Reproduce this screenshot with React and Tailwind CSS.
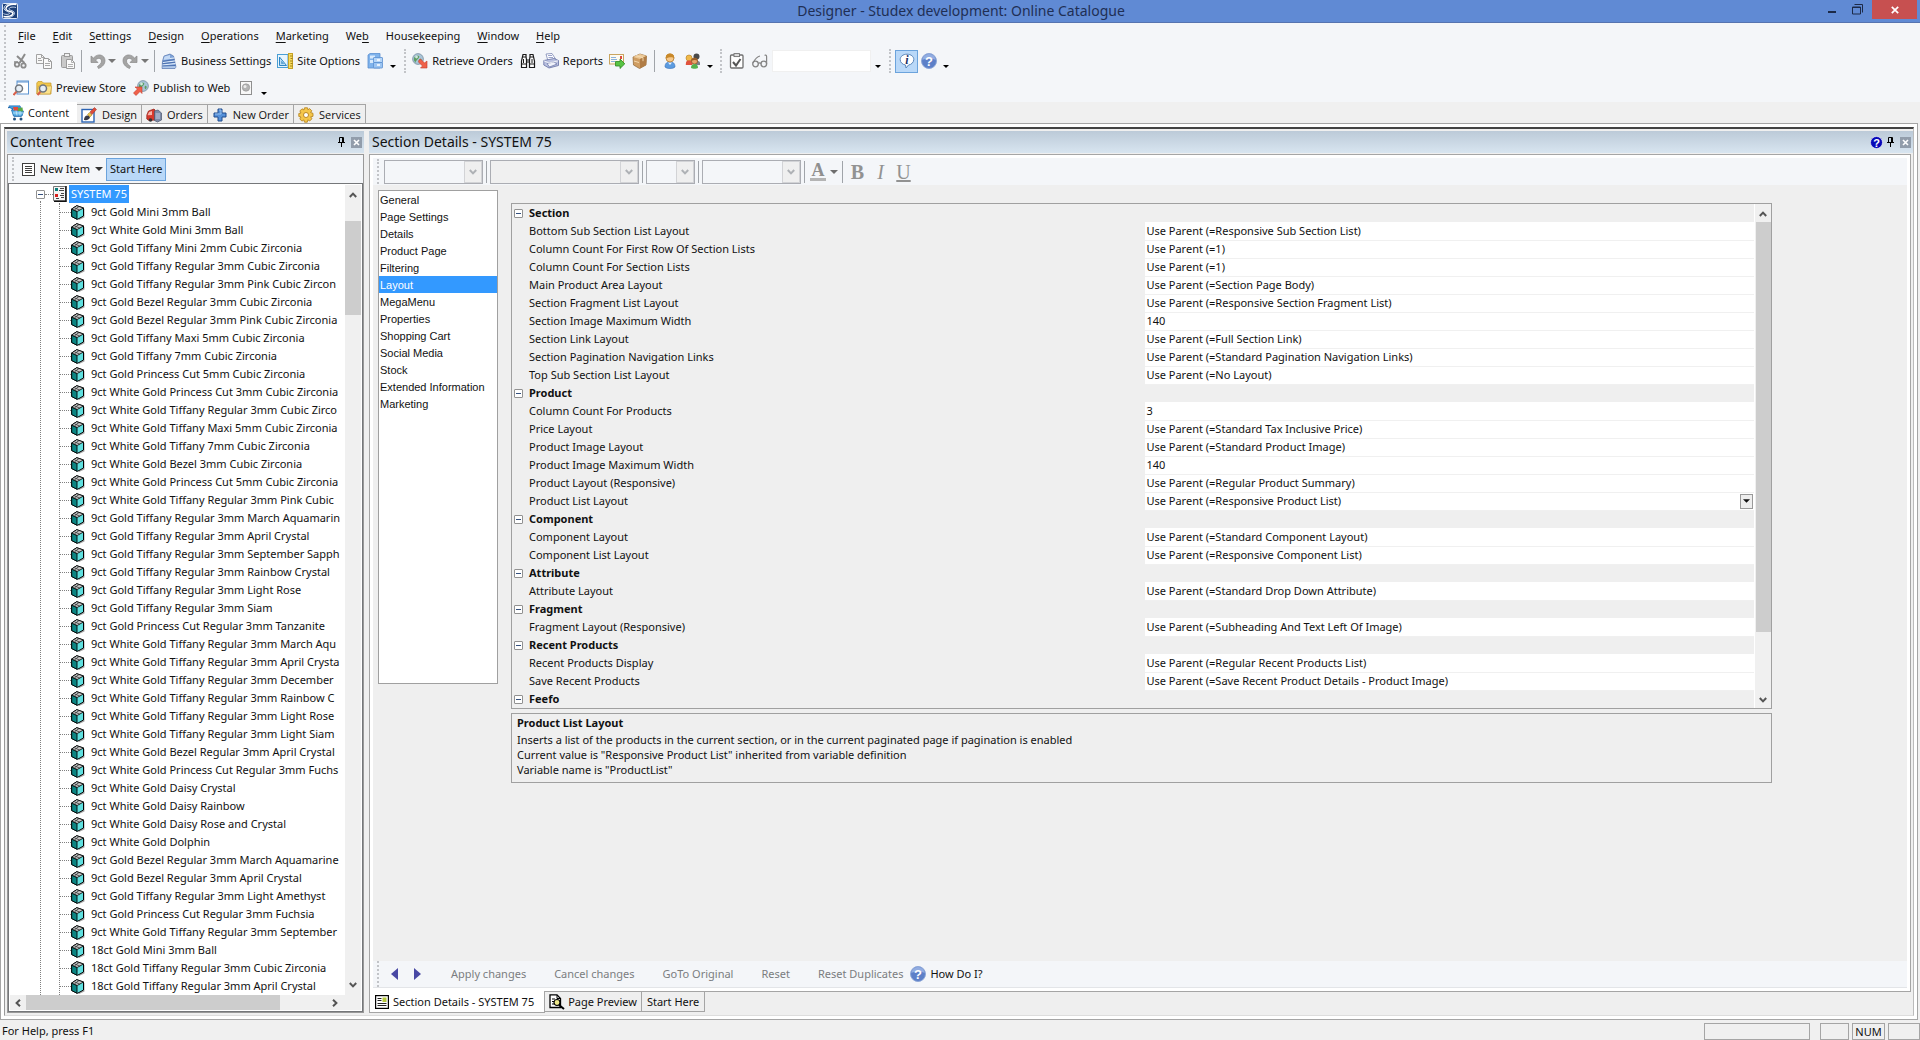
import { clsx } from 'clsx'

const menus = [
  ['', 'F', 'ile'],
  ['', 'E', 'dit'],
  ['', 'S', 'ettings'],
  ['', 'D', 'esign'],
  ['', 'O', 'perations'],
  ['', 'M', 'arketing'],
  ['We', 'b', ''],
  ['House', 'k', 'eeping'],
  ['', 'W', 'indow'],
  ['', 'H', 'elp'],
]

const treeItems = [
  '9ct Gold Mini 3mm Ball',
  '9ct White Gold Mini 3mm Ball',
  '9ct Gold Tiffany Mini 2mm Cubic Zirconia',
  '9ct Gold Tiffany Regular 3mm Cubic Zirconia',
  '9ct Gold Tiffany Regular 3mm Pink Cubic Zircon',
  '9ct Gold Bezel Regular 3mm Cubic Zirconia',
  '9ct Gold Bezel Regular 3mm Pink Cubic Zirconia',
  '9ct Gold Tiffany Maxi 5mm Cubic Zirconia',
  '9ct Gold Tiffany 7mm Cubic Zirconia',
  '9ct Gold Princess Cut 5mm Cubic Zirconia',
  '9ct White Gold Princess Cut 3mm Cubic Zirconia',
  '9ct White Gold Tiffany Regular 3mm Cubic Zirco',
  '9ct White Gold Tiffany Maxi 5mm Cubic Zirconia',
  '9ct White Gold Tiffany 7mm Cubic Zirconia',
  '9ct White Gold Bezel 3mm Cubic Zirconia',
  '9ct White Gold Princess Cut 5mm Cubic Zirconia',
  '9ct White Gold Tiffany Regular 3mm Pink Cubic',
  '9ct Gold Tiffany Regular 3mm March Aquamarin',
  '9ct Gold Tiffany Regular 3mm April Crystal',
  '9ct Gold Tiffany Regular 3mm September Sapph',
  '9ct Gold Tiffany Regular 3mm Rainbow Crystal',
  '9ct Gold Tiffany Regular 3mm Light Rose',
  '9ct Gold Tiffany Regular 3mm Siam',
  '9ct Gold Princess Cut Regular 3mm Tanzanite',
  '9ct White Gold Tiffany Regular 3mm March Aqu',
  '9ct White Gold Tiffany Regular 3mm April Crysta',
  '9ct White Gold Tiffany Regular 3mm December',
  '9ct White Gold Tiffany Regular 3mm Rainbow C',
  '9ct White Gold Tiffany Regular 3mm Light Rose',
  '9ct White Gold Tiffany Regular 3mm Light Siam',
  '9ct White Gold Bezel Regular 3mm April Crystal',
  '9ct White Gold Princess Cut Regular 3mm Fuchs',
  '9ct White Gold Daisy Crystal',
  '9ct White Gold Daisy Rainbow',
  '9ct White Gold Daisy Rose and Crystal',
  '9ct White Gold Dolphin',
  '9ct Gold Bezel Regular 3mm March Aquamarine',
  '9ct Gold Bezel Regular 3mm April Crystal',
  '9ct Gold Tiffany Regular 3mm Light Amethyst',
  '9ct Gold Princess Cut Regular 3mm Fuchsia',
  '9ct White Gold Tiffany Regular 3mm September',
  '18ct Gold Mini 3mm Ball',
  '18ct Gold Tiffany Regular 3mm Cubic Zirconia',
  '18ct Gold Tiffany Regular 3mm April Crystal',
]

const pages = [
  'General', 'Page Settings', 'Details', 'Product Page', 'Filtering', 'Layout', 'MegaMenu',
  'Properties', 'Shopping Cart', 'Social Media', 'Stock', 'Extended Information', 'Marketing',
]

const groups = [
  {
    name: 'Section',
    rows: [
      ['Bottom Sub Section List Layout', 'Use Parent (=Responsive Sub Section List)'],
      ['Column Count For First Row Of Section Lists', 'Use Parent (=1)'],
      ['Column Count For Section Lists', 'Use Parent (=1)'],
      ['Main Product Area Layout', 'Use Parent (=Section Page Body)'],
      ['Section Fragment List Layout', 'Use Parent (=Responsive Section Fragment List)'],
      ['Section Image Maximum Width', '140'],
      ['Section Link Layout', 'Use Parent (=Full Section Link)'],
      ['Section Pagination Navigation Links', 'Use Parent (=Standard Pagination Navigation Links)'],
      ['Top Sub Section List Layout', 'Use Parent (=No Layout)'],
    ],
  },
  {
    name: 'Product',
    rows: [
      ['Column Count For Products', '3'],
      ['Price Layout', 'Use Parent (=Standard Tax Inclusive Price)'],
      ['Product Image Layout', 'Use Parent (=Standard Product Image)'],
      ['Product Image Maximum Width', '140'],
      ['Product Layout (Responsive)', 'Use Parent (=Regular Product Summary)'],
      ['Product List Layout', 'Use Parent (=Responsive Product List)'],
    ],
  },
  {
    name: 'Component',
    rows: [
      ['Component Layout', 'Use Parent (=Standard Component Layout)'],
      ['Component List Layout', 'Use Parent (=Responsive Component List)'],
    ],
  },
  { name: 'Attribute', rows: [['Attribute Layout', 'Use Parent (=Standard Drop Down Attribute)']] },
  { name: 'Fragment', rows: [['Fragment Layout (Responsive)', 'Use Parent (=Subheading And Text Left Of Image)']] },
  {
    name: 'Recent Products',
    rows: [
      ['Recent Products Display', 'Use Parent (=Regular Recent Products List)'],
      ['Save Recent Products', 'Use Parent (=Save Recent Product Details - Product Image)'],
    ],
  },
  { name: 'Feefo', rows: [] },
]

/* ---------- icons ---------- */

function Icon({ children, className = 'size-4', box = '0 0 16 16' }) {
  return (
    <svg viewBox={box} className={clsx('shrink-0', className)} fill="none" aria-hidden="true">
      {children}
    </svg>
  )
}

const AppLogo = () => (
  <Icon>
    <rect x=".5" y=".5" width="15" height="15" rx="1" fill="#1d3f78" stroke="#dfe8f5" />
    <path d="M14.500 1.500C8 .5 3.500 3 4 6s7.500 2 7 4.500-5 3.500-9.500 3" stroke="#fff" strokeWidth="1.500" />
    <path d="M14 4.500C10 3.500 7 4.500 7 6s6 1.500 5.500 4.500S7 15 3.500 15M1.500 10.500c2 1.500 6.500 1 6-.5S2 8 2 5.500 4 1.500 7 1" stroke="#d5e2f4" strokeWidth=".9" />
  </Icon>
)

const CutIcon = () => (
  <Icon>
    <path d="M12 1 6.500 10M4 3l7.500 7" stroke="#8b8b8b" strokeWidth="2" />
    <circle cx="4" cy="11.500" r="2.200" stroke="#8b8b8b" strokeWidth="1.800" />
    <circle cx="10.500" cy="12.500" r="2.200" stroke="#8b8b8b" strokeWidth="1.800" />
    <path d="M1 9h4" stroke="#8b8b8b" strokeWidth="1.500" />
  </Icon>
)

const CopyIcon = () => (
  <Icon>
    <path d="M.5 1.500h5l3 3v6h-8z" fill="#f7f7f7" stroke="#a3a3a3" />
    <path d="M5.500 1.500v3h3M2 5.500h3M2 7.500h4" stroke="#a3a3a3" />
    <path d="M7.500 5.500h5l3 3v7h-8z" fill="#fafafa" stroke="#9a9a9a" />
    <path d="M12.500 5.500v3h3M9 10.500h5M9 12.500h5" stroke="#a8a8a8" />
  </Icon>
)

const PasteIcon = () => (
  <Icon>
    <rect x="1.500" y="2.500" width="11" height="12" rx="1" fill="#c9c9c9" stroke="#9b9b9b" />
    <rect x="4.500" y=".5" width="5" height="3" fill="#f0f0f0" stroke="#9b9b9b" />
    <path d="M6.500 6.500h5l3 3v6h-8z" fill="#fafafa" stroke="#9b9b9b" />
    <path d="M11.500 6.500v3h3M8 11.500h5M8 13.500h5" stroke="#b0b0b0" />
  </Icon>
)

const UndoIcon = ({ flip }) => (
  <Icon className={clsx('size-4', flip && '-scale-x-100')}>
    <path d="M1 3v6.500h7L5.500 7C8 4.500 11.500 5 11.500 8c0 2.500-2 4-4 5.500l1 2c4-1.500 6.500-4.500 6.500-8C15 2 8-.5 3.500 5z" fill="#a4a4a4" stroke="#8a8a8a" strokeWidth=".7" />
  </Icon>
)

const BuildingIcon = () => (
  <Icon>
    <path d="m3 3 6-2 3.500 2L15 14l-1 1.500H1L1.500 8z" fill="#7ea3d8" stroke="#4b6ca8" strokeWidth=".6" />
    <path d="M3.500 3.500 9 2v4L2.500 7z" fill="#c3d9f5" />
    <path d="M2 9.500 14 8M1.500 12 14.500 10.500M1.500 14h13M9 5.500l4-.5" stroke="#e4effc" strokeWidth="1" />
    <path d="M2 8.300 13.500 6.500M1.500 13l13-.5M1.500 10.700 14 9.200" stroke="#3f62a3" strokeWidth=".8" />
  </Icon>
)

const SiteIcon = () => (
  <Icon>
    <rect x=".5" y="1.500" width="10.500" height="13" fill="#e9f5fd" stroke="#4a9fd4" />
    <path d="M2.500 4v8.500h7z" fill="#bfe1f6" stroke="#2f86c4" />
    <path d="M4.500 8.500v2h2z" fill="#fff" stroke="#2f86c4" strokeWidth=".7" />
    <rect x="11.500" y=".5" width="4" height="15" fill="#f8dc5e" stroke="#c6a227" />
    <path d="M13 3h2.500M13.500 5.500h2M13 8h2.500M13.500 10.500h2M13 13h2.500" stroke="#8b6d10" strokeWidth=".8" />
  </Icon>
)

const CabinetIcon = () => (
  <Icon>
    <path d="M1 2 3 .5h10V15H1z" fill="#7fb3ec" stroke="#5a8fd0" strokeWidth=".8" />
    <path d="M3 2.500h5v3H3zM3 7h4v3H3z" fill="#d8eafc" />
    <rect x="6.500" y="4.500" width="9" height="5" rx=".5" fill="#b5d5f7" stroke="#5a8fd0" strokeWidth=".8" />
    <rect x="6.500" y="9.500" width="9" height="5.500" rx=".5" fill="#9cc5f2" stroke="#5a8fd0" strokeWidth=".8" />
    <path d="M10 7h3M10 12h3" stroke="#fff" strokeWidth="1.300" />
  </Icon>
)

const Globe = ({ cx, cy, r }) => (
  <g>
    <circle cx={cx} cy={cy} r={r} fill="#a9c4d8" stroke="#6d8598" strokeWidth=".7" />
    <path d={`M${cx - 4} ${cy - 1}c1-3 4-3 5-2s-1 3-2 4-2 2-1 3-3-2-2-5zM${cx + 2} ${cy}c2-1 2 2 1 3s-2-2-1-3z`} fill="#5c9e62" />
    <circle cx={cx - 1.5} cy={cy - 2} r="1.400" fill="#eef7ff" opacity=".8" />
  </g>
)

const RetrieveIcon = () => (
  <Icon>
    <Globe cx={6} cy={6} r={5.4} />
    <path d="m7 7 1.500-1 4 4L15 8v7H8.500l2-2L6.500 9z" fill="#f0614a" stroke="#c23a28" strokeWidth=".6" />
  </Icon>
)

const PublishIcon = () => (
  <Icon>
    <Globe cx={10} cy={6} r={5.4} />
    <path d="M2 7h7v6.500L7 11.500l-4 4L.5 13l4-4z" fill="#f0614a" stroke="#c23a28" strokeWidth=".6" />
  </Icon>
)

const BinocularsIcon = () => (
  <Icon>
    <path d="M3 1.500h3v2L6.500 7v7.500h-5V8zM13 1.500h-3v2L9.500 7v7.500h5V8z" fill="#fff" stroke="#1a1a1a" strokeWidth="1.200" />
    <path d="M1.500 11h5M9.500 11h5M3 4h3M10 4h3M6.500 7h3M6.500 9h3" stroke="#1a1a1a" strokeWidth="1.200" />
    <path d="M3.500 6v4M12 6v4" stroke="#1a1a1a" />
  </Icon>
)

const PrinterIcon = () => (
  <Icon>
    <path d="m3 1 6-.5L12.500 6 5 8z" fill="#fff" stroke="#7b86b3" strokeWidth=".8" />
    <path d="M5 2.500h4M5.500 4.500h4.500" stroke="#9aa4cc" />
    <path d="M.8 7.500 11 5.500l4.500 2v5L6 15l-5.200-3z" fill="#b9c0df" stroke="#6470a3" strokeWidth=".8" />
    <path d="m4 10.500 7-1.500 3 2-7.500 3z" fill="#f1f3fb" stroke="#6470a3" strokeWidth=".7" />
    <path d="m1 7.800 5 2.200 9-2.200" stroke="#fff" strokeWidth=".8" />
  </Icon>
)

const MailIcon = () => (
  <Icon>
    <rect x=".5" y="1.500" width="14" height="9.500" fill="#fdfaf0" stroke="#c9a560" />
    <path d="M2 4.500h5M2 6.500h6M2 8.500h4" stroke="#8ab2dc" />
    <rect x="11" y="3" width="2" height="3" fill="#dc4a3e" />
    <path d="M6.500 8.500H11V6l4.800 4.800L11 15.500V13H6.500z" fill="#58c344" stroke="#2b8620" strokeWidth=".8" />
  </Icon>
)

const BoxIcon = () => (
  <Icon>
    <path d="m1 4 7-3 6.500 2-.5 9-6.500 3.500L1.500 12z" fill="#cf9d62" stroke="#8f6535" strokeWidth=".7" />
    <path d="m1 4 7-3 6.500 2L8 6z" fill="#ecc998" />
    <path d="M8 6v9.500l6-3.500.5-9z" fill="#b07c45" />
    <path d="m4 2.700 7 2v3.500M2 8l5 1.500" stroke="#f6deb5" strokeWidth=".9" />
  </Icon>
)

const PersonIcon = () => (
  <Icon>
    <path d="M3 14c0-4 2-5 5-5s5 1 5 5c-2 2-8 2-10 0z" fill="#5b9be0" stroke="#3a70b5" strokeWidth=".6" />
    <path d="M6 9.500 8 12l2-2.500z" fill="#e9f3fd" />
    <circle cx="8" cy="5" r="4" fill="#f6c88b" stroke="#a86f20" strokeWidth=".7" />
    <path d="M3.800 5.500C3.500 2 5.500.6 8 .6s4.500 1.400 4.200 4.900C11 4 8 3.500 3.800 5.500z" fill="#c9892a" />
  </Icon>
)

const PeopleIcon = () => (
  <Icon>
    <circle cx="11.500" cy="3.500" r="3" fill="#4a4a4a" />
    <path d="M8.500 10c0-3 6.500-3 6.500 0v2h-6z" fill="#7b8088" />
    <circle cx="4" cy="5" r="3" fill="#f0b94a" stroke="#b47a1c" strokeWidth=".6" />
    <path d="M.8 12C.8 8 2 7.500 4 7.500S7.500 8 7.500 12z" fill="#e0523e" />
    <circle cx="9.500" cy="8" r="3.100" fill="#e9a76a" stroke="#8d5726" strokeWidth=".8" />
    <path d="M6.300 8c0-4 6.400-4 6.400 0-2-1.200-4-1.200-6.400 0z" fill="#9a5e28" />
    <path d="M6 15c0-3 1.500-4 3.500-4s3.500 1 3.500 4c-1.500 1-5.500 1-7 0z" fill="#55b24c" />
  </Icon>
)

const ChecklistIcon = () => (
  <Icon>
    <rect x="1.500" y="2" width="12.500" height="13" rx="1" fill="#fff" stroke="#6f6f6f" strokeWidth="1.300" />
    <rect x="5" y=".6" width="5.500" height="3" fill="#ddd" stroke="#6f6f6f" strokeWidth=".9" />
    <path d="m4 9 3 3.500L11.500 6" stroke="#555" strokeWidth="2" />
  </Icon>
)

const GlassesIcon = () => (
  <Icon>
    <circle cx="3.500" cy="11" r="2.800" stroke="#858585" strokeWidth="1.300" />
    <circle cx="11.800" cy="11" r="2.800" stroke="#858585" strokeWidth="1.300" />
    <path d="M6.300 10.500c.8-.8 2-.8 2.800 0M1 10C3 6 5 3.500 8 3M14.600 11V3.500c0-1.500-1.500-1.800-2-1" stroke="#858585" strokeWidth="1.200" />
  </Icon>
)

const InfoIcon = () => (
  <Icon>
    <path d="M8 1.200c4 0 6.800 2.300 6.800 5.300S12 11.800 9.500 12L7 15l-.5-3C3.500 11.500 1.200 9.500 1.200 6.500S4 1.200 8 1.200z" fill="#fff" stroke="#5a86ba" />
    <text x="8" y="10.500" textAnchor="middle" fontFamily="Liberation Serif, serif" fontStyle="italic" fontWeight="700" fontSize="12" fill="#1a2f66">i</text>
  </Icon>
)

const HelpIcon = () => (
  <Icon>
    <circle cx="8" cy="8" r="7.500" fill="#5d80c8" stroke="#8ea7d8" />
    <path d="M1.500 7a6.500 6 0 0 1 13 0c-4-2-9-2-13 0z" fill="#a9c0ec" opacity=".7" />
    <text x="8" y="12.500" textAnchor="middle" fontFamily="Liberation Sans, sans-serif" fontWeight="700" fontSize="13" fill="#fff">?</text>
  </Icon>
)

const Magnifier = ({ x = 0, y = 0 }) => (
  <g transform={`translate(${x} ${y})`}>
    <path d="m1 13.500 3.500-4" stroke="#d9604a" strokeWidth="2" />
    <circle cx="6.500" cy="7" r="3.500" fill="#e6eef6" stroke="#70757d" strokeWidth="1.500" />
  </g>
)

const PreviewIcon = () => (
  <Icon>
    <rect x="4" y="1" width="11.500" height="13" fill="#fff" stroke="#5a92d0" />
    <path d="M4 2h11.500" stroke="#5a92d0" />
    <Magnifier x={-0.5} y={1.5} />
  </Icon>
)

const FolderIcon = () => (
  <Icon>
    <path d="M.8 3 2 1.500h4L7.500 3H15v11H.8z" fill="#f2c94e" stroke="#c4962a" strokeWidth=".7" />
    <path d="M2.500 6h13.300l-1.500 8H1z" fill="#fbe28c" stroke="#c4962a" strokeWidth=".6" />
    <Magnifier x={0.5} y={1.5} />
  </Icon>
)

const RecordIcon = () => (
  <Icon>
    <rect x="2.500" y="1.500" width="11" height="13" fill="#f8f8f8" stroke="#8f8f8f" />
    <circle cx="8" cy="7.500" r="3.700" fill="#b4b4b4" stroke="#8d8d8d" strokeWidth=".6" />
    <circle cx="7" cy="6.500" r="1.500" fill="#ececec" />
  </Icon>
)

const CartIcon = () => (
  <Icon>
    <path d="M0 2.500 4 2l2.500 9h7" stroke="#2c6fae" strokeWidth="1.500" />
    <path d="m3.500 5 12 1-1.500 5H5.500z" fill="#5fb5ea" stroke="#2371b3" strokeWidth=".8" />
    <path d="M1 .8h11l1 2-10 1z" fill="#3f9be0" stroke="#2371b3" strokeWidth=".6" />
    <path d="M5 2h5l.5 3.500H6z" fill="#de4c3a" />
    <path d="m10 3 4.500-.5.5 4-5-.5z" fill="#58a845" />
    <path d="M5 8h10M8 5.500l1 5M12 6v4.500" stroke="#d4edfb" strokeWidth=".7" />
    <circle cx="6.500" cy="14" r="1.500" fill="#23517f" />
    <circle cx="13" cy="14" r="1.500" fill="#23517f" />
  </Icon>
)

const BrushIcon = () => (
  <Icon>
    <rect x="1" y="2.500" width="12" height="12.500" fill="#fff" stroke="#2c64b4" strokeWidth="1.400" />
    <path d="M3 13c0-3 1.500-5 4.500-4.500L9 10c0 2.500-3 3.500-6 3z" fill="#3a3a46" />
    <path d="m6.500 7.500 2-2 2.500 2.500-2 2z" fill="#eac14a" stroke="#a17a1c" strokeWidth=".5" />
    <path d="M9 5 13.500.5l2 2L11 7.500z" fill="#dd4a38" stroke="#9a2b1c" strokeWidth=".5" />
  </Icon>
)

const TruckIcon = () => (
  <Icon>
    <path d="M.8 8 2.500 4 8 2l1 1v10l-6 .5L.8 12z" fill="#d6392d" stroke="#8e1d15" strokeWidth=".7" />
    <path d="M1.500 8.200 3 5l3-1v4z" fill="#f7b3a8" />
    <path d="m8.500 4 3.500-1 3.500 3v7l-4 2-3-1.500z" fill="#7d8aa6" stroke="#4b556f" strokeWidth=".7" />
    <path d="M9.500 7h4.500M9.500 9h4.500M9.500 11h4.500" stroke="#c5cfe3" />
    <circle cx="4.500" cy="13" r="1.800" fill="#333" />
  </Icon>
)

const PlusIcon = () => (
  <Icon>
    <path d="M6 2h4v4h4v4h-4v4H6v-4H2V6h4z" fill="#5590d8" stroke="#1f4a8d" />
    <path d="M7 3h2v4H3" stroke="#a8ccf3" strokeWidth=".8" />
  </Icon>
)

const GearIcon = () => (
  <Icon>
    <path d="M6.500.8h3l.4 2 1.700-1.200 2.200 2.200L12.600 5.500l2.400.8v3l-2.300.5 1.200 2-2.200 2.200-1.900-1.200-.5 2.400h-2.800l-.6-2.300-2 1.200-2.100-2.200L3 10 .8 9.500v-3L3 6 1.800 4 4 1.800 6 3z" fill="#f4c64a" stroke="#b27d16" strokeWidth=".8" />
    <circle cx="8" cy="8" r="2.500" fill="#fff" stroke="#b27d16" strokeWidth=".9" />
  </Icon>
)

const NewItemIcon = () => (
  <Icon className="h-[13px] w-[13px]" box="0 0 13 13">
    <rect x=".5" y=".5" width="12" height="12" fill="#fff" stroke="#3f3f3f" />
    <path d="M3 3.500h7M3 5.500h7M3 7.500h7M3 9.500h7" stroke="#3f3f3f" />
  </Icon>
)

const SectionIcon = () => (
  <Icon className="h-4 w-[14px]" box="0 0 14 16">
    <path d="M.5.500h12v14H.5z" fill="#f4f4f4" stroke="#777" />
    <path d="M13 0v15.500H1" stroke="#111" strokeWidth="1.500" />
    <path d="M2 2h3v3H2z" fill="#0d7f7c" />
    <path d="M2 8h3v3H2z" fill="#d9201c" />
    <path d="M7 2.500h4M6 4.500h5M8 7.500h3M7 9.500h4M8 11.500h3M3 12.500h3" stroke="#444" />
  </Icon>
)

const CubeIcon = () => (
  <Icon className="h-[15px] w-[14px]" box="0 0 14 15">
    <path d="m2 4 11.500 0v8.500L8 15z" fill="#a9a9a9" />
    <path d="m.7 4 5-3.300L12.500 3v8L6.500 14.300.7 11.500z" fill="#5fdfdf" stroke="#000" />
    <path d="M.7 4v7.500l5.300 2.800V6.500z" fill="#0c8583" stroke="#000" strokeWidth=".9" />
    <path d="m.7 4 5-3.300L12.500 3 6.200 6.500z" fill="#c9c9c9" stroke="#000" strokeWidth=".8" />
    <path d="m3.500 2.800 5.500 2.500M8 1.500 3.500 4.800" stroke="#333" strokeWidth=".8" />
  </Icon>
)

const PinIcon = () => (
  <Icon className="h-[10px] w-[7px]" box="0 0 7 10">
    <path d="M1.500 5V.5h4V5M0 5.500h7M3.500 6v4" stroke="#000" />
    <path d="M4.500 0v5" stroke="#000" />
  </Icon>
)

const RoundHelp = () => (
  <Icon className="h-[13px] w-[13px]" box="0 0 13 13">
    <circle cx="6.500" cy="6.500" r="6" fill="#0808b8" stroke="#fff" strokeWidth=".6" />
    <text x="6.500" y="10.500" textAnchor="middle" fontFamily="Liberation Sans, sans-serif" fontWeight="700" fontSize="11" fill="#fff">?</text>
  </Icon>
)

const DetailsIcon = () => (
  <Icon className="h-[14px] w-[14px]" box="0 0 14 14">
    <rect x=".6" y=".6" width="12.800" height="12.800" fill="#fff" stroke="#000" strokeWidth="1.200" />
    <path d="M2.500 3.500h4M2.500 5.500h4M2.500 8.500h9M2.500 10.500h9" stroke="#222" />
    <rect x="7.500" y="2.500" width="4" height="4.500" fill="#b6c83c" />
  </Icon>
)

const PagePreviewIcon = () => (
  <Icon>
    <path d="M1 .8h7l3.500 3.700v9H1z" fill="#fff" stroke="#000" strokeWidth="1.300" />
    <path d="M8 1v3.500h3.500M3 5h3M3 7.500h2M3 10h2" stroke="#000" />
    <circle cx="8" cy="8.500" r="3" fill="#efe98c" stroke="#000" strokeWidth="1.200" />
    <path d="m10 11 5 4" stroke="#000" strokeWidth="2" />
  </Icon>
)

const Chevron = ({ dir, light }) => (
  <Icon
    className={clsx('h-2 w-2', dir === 'down' && 'rotate-180', dir === 'left' && '-rotate-90', dir === 'right' && 'rotate-90')}
    box="0 0 8 8"
  >
    <path d="m.8 6 3.200-3.400L7.200 6" stroke={light ? '#aeb1b5' : '#555'} strokeWidth="2" />
  </Icon>
)

const Triangle = ({ className }) => (
  <svg viewBox="0 0 8 4" className={clsx('h-1 w-2 shrink-0', className)} aria-hidden="true">
    <path d="M0 0h8L4 4z" fill="currentColor" />
  </svg>
)

/* ---------- toolbar parts ---------- */

const Grip = () => <div className="w-0.5 self-stretch border-l-2 border-dotted border-[#c2c4c8]" />

const Sep = ({ className }) => <div className={clsx('h-[22px] w-px bg-[#a0a4a9]', className)} />

const Overflow = () => (
  <button aria-label="Toolbar options" className="flex h-[22px] w-[9px] items-end justify-center pb-1">
    <svg viewBox="0 0 6 3" className="h-[3px] w-[6px]"><path d="M0 0h6L3 3z" fill="#000" /></svg>
  </button>
)

function Tool({ icon, label, children, className }) {
  return (
    <button aria-label={label} className={clsx('flex items-center gap-1 whitespace-nowrap', className)}>
      {icon}
      {children}
    </button>
  )
}

function Combo({ label, width, filled }) {
  return (
    <div className={clsx('relative h-6 border border-[#abadb3]', width)}>
      <select disabled aria-label={label} className={clsx('size-full appearance-none', filled ? 'bg-[#f0f0f0]' : 'bg-[#f4f6f9]')} />
      <span className="pointer-events-none absolute inset-y-0 right-0 flex w-[18px] items-center justify-center border border-[#d2d3d6] bg-[#efefef]">
        <Chevron dir="down" light />
      </span>
    </div>
  )
}

function Tab({ icon, children, active }) {
  return (
    <button
      className={clsx(
        'flex items-center whitespace-nowrap border-[#a5a5a5] font-[Open_Sans,sans-serif]',
        active ? 'h-[21px] gap-1 bg-white pl-2 pr-2' : 'h-[19px] gap-[5px] border border-l-0 border-b-0 bg-[#efefef] px-1 pt-0.5',
      )}
    >
      {icon}
      {children}
    </button>
  )
}

function PaneTitle({ children, help }) {
  return (
    <div className="mt-0.5 flex h-[22px] items-center bg-linear-to-b from-[#bccad8] to-[#d8e5f0] pl-[3px] pr-0.5">
      <h2 className="flex-1 text-[14px]">{children}</h2>
      {help && <button aria-label="Help" className="mr-1"><RoundHelp /></button>}
      <button aria-label="Pin" className="mr-1.5"><PinIcon /></button>
      <button aria-label="Close" className="flex size-[11px] items-center justify-center bg-[#929dab]">
        <Icon className="size-[7px]" box="0 0 7 7"><path d="m1 1 5 5M6 1 1 6" stroke="#fff" strokeWidth="1.600" /></Icon>
      </button>
    </div>
  )
}

const Toggle = () => (
  <button aria-label="Collapse" className="flex size-[9px] items-center justify-center rounded-[1px] border border-[#919191] bg-white">
    <span className="h-px w-[5px] bg-[#34507e]" />
  </button>
)

/* ---------- panes ---------- */

function ContentTree() {
  return (
    <section className="flex w-[357px] shrink-0 flex-col">
      <PaneTitle>Content Tree</PaneTitle>
      <div className="mt-px flex flex-1 flex-col border border-[#999]">
        <div className="flex h-7 items-center bg-[#f4f6f9] py-0.5 pl-1">
          <Grip />
          <button className="ml-2 flex items-center gap-[5px]">
            <NewItemIcon />
            New Item
            <Triangle className="text-[#333]" />
          </button>
          <button className="ml-[3px] h-[23px] border border-[#6ba3dc] bg-[#b9d8f8] px-[3px]">Start Here</button>
        </div>
        <div className="flex-1 border border-[#75777a] bg-white p-px">
          <div className="flex">
            <ul className="min-w-0 flex-1 overflow-hidden whitespace-nowrap pl-[26px]">
              <li className="relative">
                <div className="flex h-[18px] items-center">
                  <Toggle />
                  <span className="w-2 border-t border-dotted border-[#808080]" />
                  <SectionIcon />
                  <span className="ml-0.5 bg-[#3399ff] px-0.5 leading-[18px] text-white">SYSTEM 75</span>
                </div>
                <span className="absolute bottom-0 left-1 top-4 border-l border-dotted border-[#808080]" />
                <ul className="ml-[23px] border-l border-dotted border-[#808080]">
                  {treeItems.map((item) => (
                    <li key={item} className="flex h-[18px] items-center">
                      <span className="w-[11px] shrink-0 border-t border-dotted border-[#808080]" />
                      <CubeIcon />
                      <span className="ml-1.5">{item}</span>
                    </li>
                  ))}
                </ul>
              </li>
            </ul>
            <div className="flex w-4 flex-col items-center bg-[#f0f0f0] py-1.5">
              <Chevron dir="up" />
              <div className="mt-[22px] h-[94px] w-4 bg-[#cdcdcd]" />
              <div className="flex-1" />
              <Chevron dir="down" />
            </div>
          </div>
          <div className="flex h-[15px] items-center bg-[#f0f0f0] pl-1">
            <Chevron dir="left" />
            <div className="ml-1 h-[15px] w-[254px] bg-[#cdcdcd]" />
            <div className="flex-1" />
            <Chevron dir="right" />
            <div className="w-[22px]" />
          </div>
        </div>
      </div>
    </section>
  )
}

function PropertyGrid() {
  return (
    <div className="flex border border-[#a0a0a0]">
      <table className="w-full flex-1 table-fixed border-collapse text-left">
        <colgroup>
          <col className="w-[17px]" />
          <col />
          <col className="w-[49%]" />
        </colgroup>
        {groups.map((group) => (
          <tbody key={group.name}>
            <tr className="h-[18px]">
              <td className="p-0 pl-0.5"><Toggle /></td>
              <th colSpan={2} className="p-0 font-bold">{group.name}</th>
            </tr>
            {group.rows.map(([name, value]) => (
              <tr key={name} className="h-[18px]">
                <td className="p-0" />
                <td className="p-0">{name}</td>
                <td className="border-b border-[#f0f0f0] bg-white p-0 pl-px">
                  {name === 'Product List Layout' ? (
                    <div className="flex h-[17px] items-center justify-between pr-px">
                      {value}
                      <button aria-label="Choose layout" className="flex h-[15px] w-[13px] items-center justify-center border border-[#999] bg-[#eee]">
                        <Triangle className="w-[7px]" />
                      </button>
                    </div>
                  ) : value}
                </td>
              </tr>
            ))}
          </tbody>
        ))}
      </table>
      <div className="flex w-[17px] flex-col items-center border-l border-white bg-[#f0f0f0] pb-1 pt-1.5">
        <Chevron dir="up" />
        <div className="mt-1 h-[410px] w-[15px] bg-[#cdcdcd]" />
        <div className="flex-1" />
        <Chevron dir="down" />
      </div>
    </div>
  )
}

function SectionDetails() {
  return (
    <section className="flex min-w-0 flex-1 flex-col">
      <PaneTitle help>Section Details - SYSTEM 75</PaneTitle>
      <div className="mt-px mr-0.5 flex flex-1 flex-col border border-[#a5a5a5] bg-white p-[3px]">
        <div className="flex h-[27px] items-center bg-[#f4f6f9] py-px pl-1">
          <Grip />
          <div className="ml-[5px] flex items-center gap-[3px]">
            <Combo label="Style" width="w-[99px]" />
            <Sep />
            <Combo label="Font" width="w-[149px]" filled />
            <Sep />
            <Combo label="Size" width="w-[49px]" />
            <Sep />
            <Combo label="Format" width="w-[99px]" />
            <Sep />
          </div>
          <button aria-label="Text colour" className="ml-[5px] flex items-center gap-1 text-[#6e6e6e]">
            <span className="flex h-[18px] w-4 items-end justify-center border-b-[3px] border-[#b4b4b4] font-[Liberation_Serif,serif] text-[18px] font-bold leading-4 text-[#8f8f8f]">A</span>
            <Triangle />
          </button>
          <Sep className="ml-1" />
          <div className="ml-[3px] flex font-[Liberation_Serif,serif] text-[20px] leading-[22px] text-[#929292]">
            <button className="w-[23px] font-bold">B</button>
            <button className="w-[23px] italic">I</button>
            <button className="w-[23px] underline decoration-2">U</button>
          </div>
        </div>

        <div className="flex flex-1 items-start bg-[#efefef] pl-[5px] pt-[5px]">
          <ul className="h-[494px] w-[120px] shrink-0 border border-[#a0a0a0] bg-white font-[Liberation_Sans,sans-serif] text-[11px]">
            {pages.map((page) => (
              <li key={page}>
                <button
                  className={clsx(
                    'block h-[17px] w-full whitespace-nowrap pl-px text-left',
                    page === 'Layout' && 'bg-[#3399ff] text-white',
                  )}
                >
                  {page}
                </button>
              </li>
            ))}
          </ul>
          <div className="ml-[13px] mr-[135px] mt-[13px] flex min-w-0 flex-1 flex-col gap-1">
            <PropertyGrid />
            <div className="h-[70px] border border-[#a0a0a0] px-[5px] leading-[15px]">
              <h3 className="mb-0.5 mt-px font-bold">Product List Layout</h3>
              <p>Inserts a list of the products in the current section, or in the current paginated page if pagination is enabled</p>
              <p>Current value is "Responsive Product List" inherited from variable definition</p>
              <p>Variable name is "ProductList"</p>
            </div>
          </div>
        </div>

        <div className="flex h-[27px] items-center border-b border-[#e3e5e8] bg-[#f4f6f9] pl-1">
          <Grip />
          <button aria-label="Previous" className="ml-3">
            <Icon className="h-3 w-[7px]" box="0 0 7 12"><path d="M7 0v12L0 6z" fill="#4848a4" /></Icon>
          </button>
          <button aria-label="Next" className="ml-4 mr-[30px]">
            <Icon className="h-3 w-[7px]" box="0 0 7 12"><path d="M0 0v12l7-6z" fill="#4848a4" /></Icon>
          </button>
          <div className="flex gap-7 text-[#7b7d80]">
            <button>Apply changes</button>
            <button>Cancel changes</button>
            <button>GoTo Original</button>
            <button>Reset</button>
            <button>Reset Duplicates</button>
          </div>
          <Tool icon={<HelpIcon />} className="ml-[7px]">How Do I?</Tool>
        </div>
      </div>

      <div className="flex h-[21px] items-start">
        <button className="-mt-px flex h-[22px] items-center gap-1 border border-t-0 border-[#a5a5a5] bg-white pl-[5px] pr-2.5">
          <DetailsIcon />
          Section Details - SYSTEM 75
        </button>
        <button className="flex h-5 items-center gap-[3px] border border-l-0 border-t-0 border-[#a5a5a5] px-1">
          <PagePreviewIcon />
          Page Preview
        </button>
        <button className="h-5 border border-l-0 border-t-0 border-[#a5a5a5] px-[5px]">Start Here</button>
      </div>
    </section>
  )
}

export default function App() {
  return (
    <div className="flex min-h-screen flex-col bg-[#f0f0f0] font-[Noto_Sans,sans-serif] text-[11px] leading-4 text-[#111]">
      <header className="relative flex h-[23px] items-center border-b border-[#5674b0] bg-[#608ad4] pl-0.5">
        <AppLogo />
        <h1 className="flex-1 pr-4 text-center text-[14px] text-[#1f2f55]">Designer - Studex development: Online Catalogue</h1>
        <div className="absolute right-[3px] top-0 flex h-[19px] items-stretch">
          <button aria-label="Minimize" className="flex w-6 items-end pb-1.5"><span className="h-0.5 w-2 bg-[#1c2a48]" /></button>
          <button aria-label="Restore" className="flex w-5 items-center">
            <Icon className="size-[11px]" box="0 0 11 11"><path d="M.5 3h8v7h-8zM2.500.5h8v8M.5 3.500h8" stroke="#1c2a48" /></Icon>
          </button>
          <button aria-label="Close" className="flex w-[45px] items-center justify-center bg-[#c75050]">
            <Icon className="size-2" box="0 0 8 8"><path d="m.8.8 6.400 6.400M7.200.8.8 7.200" stroke="#fff" strokeWidth="1.700" /></Icon>
          </button>
        </div>
      </header>

      <div className="flex bg-[#f4f6f9] pl-1">
        <div className="flex py-0.5"><Grip /></div>
        <div className="flex flex-col">
          <nav className="flex h-[26px] items-center gap-px pl-1">
            {menus.map(([a, key, b]) => (
              <button key={a + key + b} className="px-2">{a}<u className="underline-offset-2">{key}</u>{b}</button>
            ))}
          </nav>
          <div className="flex h-6 items-center pl-[7px]">
            <Tool icon={<CutIcon />} label="Cut" />
            <Tool icon={<CopyIcon />} label="Copy" className="ml-[7px]" />
            <Tool icon={<PasteIcon />} label="Paste" className="ml-2" />
            <Sep className="ml-[5px]" />
            <Tool icon={<UndoIcon />} label="Undo" className="ml-2" />
            <Triangle className="ml-0.5 text-[#777]" />
            <Tool icon={<UndoIcon flip />} label="Redo" className="ml-1.5" />
            <Triangle className="ml-[3px] text-[#777]" />
            <Sep className="ml-[5px]" />
            <Tool icon={<BuildingIcon />} className="ml-1.5">Business Settings</Tool>
            <Tool icon={<SiteIcon />} className="ml-1.5">Site Options</Tool>
            <Tool icon={<CabinetIcon />} label="Catalogue" className="ml-[7px]" />
            <div className="ml-[5px]"><Overflow /></div>
            <div className="ml-[7px] flex h-full"><Grip /></div>
            <Tool icon={<RetrieveIcon />} className="ml-1.5">Retrieve Orders</Tool>
            <Tool icon={<BinocularsIcon />} label="Find" className="ml-[7px]" />
            <Tool icon={<PrinterIcon />} className="ml-[7px]">Reports</Tool>
            <Tool icon={<MailIcon />} label="Send mail" className="ml-1.5" />
            <Tool icon={<BoxIcon />} label="Package" className="ml-[7px]" />
            <Sep className="ml-1.5" />
            <Tool icon={<PersonIcon />} label="Customer" className="ml-[7px]" />
            <Tool icon={<PeopleIcon />} label="Customers" className="ml-[7px]" />
            <div className="ml-1"><Overflow /></div>
            <div className="ml-1.5 flex h-full"><Grip /></div>
            <Tool icon={<ChecklistIcon />} label="Check" className="ml-[7px]" />
            <Tool icon={<GlassesIcon />} label="Find text" className="ml-[7px]" />
            <input aria-label="Search" className="ml-1 h-[22px] w-[99px] border border-[#f0f0f0] bg-white px-1" />
            <div className="ml-0.5"><Overflow /></div>
            <div className="ml-[7px] flex h-full"><Grip /></div>
            <button aria-label="Information" className="ml-1 flex size-[23px] items-center justify-center border border-[#6ba3dc] bg-[#b9d8f8]">
              <InfoIcon />
            </button>
            <Tool icon={<HelpIcon />} label="Help topics" className="ml-[3px]" />
            <div className="ml-1"><Overflow /></div>
          </div>
          <div className="flex h-[29px] items-center pl-[7px] pt-px">
            <Tool icon={<PreviewIcon />} label="Preview page" />
            <Tool icon={<FolderIcon />} className="ml-[7px]">Preview Store</Tool>
            <Tool icon={<PublishIcon />} className="ml-[7px]">Publish to Web</Tool>
            <Tool icon={<RecordIcon />} label="Record" className="ml-2" />
            <div className="ml-[5px]"><Overflow /></div>
          </div>
        </div>
      </div>

      <div className="flex h-[21px] items-end">
        <Tab icon={<CartIcon />} active>Content</Tab>
        <Tab icon={<BrushIcon />}>Design</Tab>
        <Tab icon={<TruckIcon />}>Orders</Tab>
        <Tab icon={<PlusIcon />}>New Order</Tab>
        <Tab icon={<GearIcon />}>Services</Tab>
      </div>

      <main className="mr-0.5 flex flex-1 flex-col border border-[#a5a5a5] bg-white p-[3px]">
        <div className="flex flex-1 gap-[5px] border border-[#999] border-t-[#444] border-b-[#ddd] border-r-[#bbb] border-t-2 bg-[#efefef] pl-0.5 pb-0.5">
          <ContentTree />
          <SectionDetails />
        </div>
      </main>

      <footer className="flex h-5 items-center gap-[3px] pl-0.5">
        <p className="flex-1 pt-0.5">For Help, press F1</p>
        <span className="mr-[7px] mt-0.5 h-[17px] w-[106px] border border-[#a5a5a5]" />
        <span className="mt-0.5 h-[17px] w-[29px] border border-[#a5a5a5]" />
        <span className="mt-0.5 h-[17px] w-[33px] border border-[#a5a5a5] text-center">NUM</span>
        <span className="mt-0.5 h-[17px] w-8 border border-[#a5a5a5]" />
      </footer>
    </div>
  )
}
